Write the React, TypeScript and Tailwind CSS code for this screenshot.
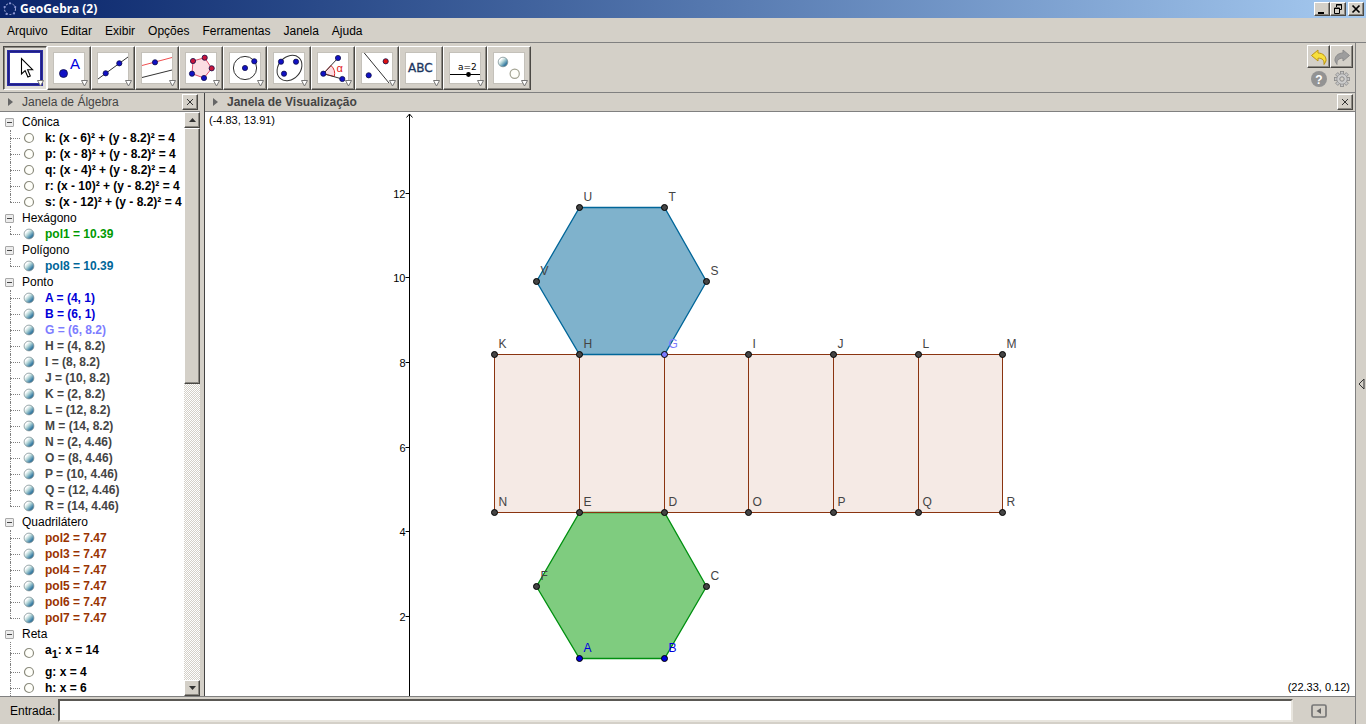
import React, { useState } from 'react';

const BLUE = '#1111c4';
const RED = '#c8143c';

interface Item {
  text: string;
  sub?: string;
  rest?: string;
  color: string;
  shown: boolean;
}

interface Group {
  name: string;
  items: Item[];
}

const hidden = (text: string): Item => ({ text, color: '#000000', shown: false });
const shown = (color: string) => (text: string): Item => ({ text, color, shown: true });

const GROUPS: Group[] = [
  {
    name: 'Cônica',
    items: [
      'k: (x - 6)² + (y - 8.2)² = 4',
      'p: (x - 8)² + (y - 8.2)² = 4',
      'q: (x - 4)² + (y - 8.2)² = 4',
      'r: (x - 10)² + (y - 8.2)² = 4',
      's: (x - 12)² + (y - 8.2)² = 4',
    ].map(hidden),
  },
  { name: 'Hexágono', items: ['pol1 = 10.39'].map(shown('#009900')) },
  { name: 'Polígono', items: ['pol8 = 10.39'].map(shown('#006699')) },
  {
    name: 'Ponto',
    items: [
      ...['A = (4, 1)', 'B = (6, 1)'].map(shown('#0000d8')),
      ...['G = (6, 8.2)'].map(shown('#7d7dff')),
      ...[
        'H = (4, 8.2)',
        'I = (8, 8.2)',
        'J = (10, 8.2)',
        'K = (2, 8.2)',
        'L = (12, 8.2)',
        'M = (14, 8.2)',
        'N = (2, 4.46)',
        'O = (8, 4.46)',
        'P = (10, 4.46)',
        'Q = (12, 4.46)',
        'R = (14, 4.46)',
      ].map(shown('#444444')),
    ],
  },
  {
    name: 'Quadrilátero',
    items: ['pol2 = 7.47', 'pol3 = 7.47', 'pol4 = 7.47', 'pol5 = 7.47', 'pol6 = 7.47', 'pol7 = 7.47'].map(
      shown('#993300'),
    ),
  },
  {
    name: 'Reta',
    items: [
      { text: 'a', sub: '1', rest: ': x = 14', color: '#000000', shown: false },
      hidden('g: x = 4'),
      hidden('h: x = 6'),
    ],
  },
];

const MENUS = ['Arquivo', 'Editar', 'Exibir', 'Opções', 'Ferramentas', 'Janela', 'Ajuda'];

const RAISED =
  'bg-[#d4d0c8] border border-t-white border-l-white border-r-[#4a4844] border-b-[#4a4844] shadow-[inset_-1px_-1px_#8c8983]';
const SUNKEN =
  'bg-[#e2dfd9] border border-t-[#4a4844] border-l-[#4a4844] border-r-white border-b-white shadow-[inset_1px_1px_#8c8983]';

const Dot = ({ x, y, c = BLUE, r = 2.6 }: { x: number; y: number; c?: string; r?: number }) => (
  <circle cx={x} cy={y} r={r} fill={c} stroke="#10104a" strokeWidth="0.8" />
);

const Sphere = ({ x, y, r, id }: { x: number; y: number; r: number; id: string }) => (
  <>
    <defs>
      <linearGradient id={id} x1="0.1" y1="0.1" x2="0.9" y2="0.9">
        <stop offset="0.2" stopColor="#ffffff" />
        <stop offset="0.45" stopColor="#b5d6d8" />
        <stop offset="0.8" stopColor="#3b7fa5" />
        <stop offset="1" stopColor="#2a6288" />
      </linearGradient>
    </defs>
    <circle cx={x} cy={y} r={r} fill={`url(#${id})`} stroke="#7f9296" strokeWidth="0.8" />
  </>
);

const TOOLS: { label: string; icon: React.ReactNode }[] = [
  {
    label: 'Mover',
    icon: (
      <path
        d="M12.5 6.5v15.5l3.6-3.4 2.8 6.4 2.4-1-2.7-6.3h5z"
        fill="#fff"
        stroke="#000"
        strokeWidth="1.1"
      />
    ),
  },
  {
    label: 'Ponto',
    icon: (
      <>
        <Dot x={10.5} y={21.5} r={4} />
        <text x="17" y="17" fontSize="15" fill="#0000dd">A</text>
      </>
    ),
  },
  {
    label: 'Reta',
    icon: (
      <>
        <path d="M1 27L31 5" stroke="#333" />
        <Dot x={8.7} y={21.3} />
        <Dot x={22.3} y={11.3} />
      </>
    ),
  },
  {
    label: 'Reta paralela',
    icon: (
      <>
        <path d="M1 13.5L31 5.5" stroke="#f05050" />
        <path d="M1 25.5L31 18" stroke="#333" />
        <Dot x={14} y={10.3} />
      </>
    ),
  },
  {
    label: 'Polígono',
    icon: (
      <>
        <path d="M8 9L19.7 5.7 26.7 16.3 19 26 7 21.7z" fill="#fbdde2" stroke="#e0506a" />
        <Dot x={8} y={9} c={RED} />
        <Dot x={19.7} y={5.7} c={RED} />
        <Dot x={26.7} y={16.3} c={RED} />
        <Dot x={19} y={26} />
        <Dot x={7} y={21.7} />
      </>
    ),
  },
  {
    label: 'Círculo',
    icon: (
      <>
        <circle cx="16" cy="16" r="11.6" fill="none" stroke="#333" />
        <Dot x={16} y={16} />
        <Dot x={25.3} y={9.3} />
      </>
    ),
  },
  {
    label: 'Elipse',
    icon: (
      <>
        <ellipse cx="16.5" cy="16" rx="14" ry="11" fill="none" stroke="#333" transform="rotate(-48 16.5 16)" />
        <Dot x={8} y={9.7} />
        <Dot x={23} y={9.7} />
        <Dot x={11} y={21.7} />
      </>
    ),
  },
  {
    label: 'Ângulo',
    icon: (
      <>
        <path d="M6.3 21.7L14 13.5A11.3 11.3 0 0 1 17.3 24.5z" fill="#fbdde2" stroke="#dd2a2a" />
        <path d="M21 6L6.3 21.7 25.3 27" fill="none" stroke="#333" />
        <Dot x={6.3} y={21.7} />
        <Dot x={21} y={6} />
        <Dot x={25.3} y={27} />
        <text x="19.5" y="20" fontSize="11" fill="#e02020">α</text>
      </>
    ),
  },
  {
    label: 'Reflexão',
    icon: (
      <>
        <path d="M3.3 1L28 31" stroke="#333" />
        <Dot x={24.7} y={9.3} c="#dd1111" />
        <Dot x={7.7} y={23.3} />
      </>
    ),
  },
  {
    label: 'Texto',
    icon: (
      <text x="3" y="20" fontSize="12" className="font-['DejaVu_Sans']" fill="#1a3560" stroke="#1a3560" strokeWidth="0.3">
        ABC
      </text>
    ),
  },
  {
    label: 'Controle deslizante',
    icon: (
      <>
        <text x="9" y="18" fontSize="9" className="font-['DejaVu_Sans']" fill="#000">a=2</text>
        <path d="M1 22.5H31" stroke="#000" />
        <circle cx="19.5" cy="22.5" r="2.4" fill="#000" />
      </>
    ),
  },
  {
    label: 'Exibir objeto',
    icon: (
      <>
        <Sphere x={10} y={10} r={4.8} id="tool-sphere" />
        <circle cx="21.7" cy="21.7" r="4.6" fill="#fffffa" stroke="#a3a392" strokeWidth="1.2" />
      </>
    ),
  },
];

interface ToolButtonProps {
  label: string;
  icon: React.ReactNode;
  active: boolean;
  onClick: () => void;
}

const ToolButton = ({ label, icon, active, onClick }: ToolButtonProps) => (
  <button aria-label={label} onClick={onClick} className={`size-11 p-px ${active ? SUNKEN : RAISED}`}>
    <svg viewBox="-4 -4 40 40" className="block size-10 font-['Liberation_Sans']">
      {active ? (
        <>
          <rect x="-0.5" y="-0.5" width="33" height="33" fill="#fff" stroke="#2e2ea4" strokeWidth="3" />
          <rect x="-0.5" y="-0.5" width="33" height="33" fill="none" stroke="#10105e" strokeWidth="1" strokeDasharray="1 1" />
        </>
      ) : (
        <rect x="0.5" y="0.5" width="31" height="31" fill="#fff" stroke="#c4c1ba" />
      )}
      {icon}
      <path d="M28.5 28.5H34.5L31.5 34z" fill="#fff" stroke="#777" />
    </svg>
  </button>
);

const CloseButton = ({ label }: { label: string }) => (
  <button aria-label={label} className={`flex size-4 items-center justify-center ${RAISED}`}>
    <svg viewBox="0 0 8 8" className="size-2">
      <path d="M1 1L7 7M7 1L1 7" stroke="#333" />
    </svg>
  </button>
);

const PanelHeader = ({ title, bold }: { title: string; bold?: boolean }) => (
  <div className="flex h-[19px] shrink-0 items-center border-b border-[#808080] bg-[#d4d0c8] pr-0.5 pl-2 text-[#444]">
    <svg viewBox="0 0 5 8" className="h-2 w-[5px]">
      <path d="M0 0L5 4 0 8z" fill="#666" />
    </svg>
    <h2 className={bold ? 'ml-[9px] flex-1 font-bold' : 'ml-[9px] flex-1'}>{title}</h2>
    <CloseButton label={`Fechar ${title}`} />
  </div>
);

const TitleBar = () => (
  <header className="flex h-[18px] shrink-0 items-center bg-linear-to-r from-[#0a246a] to-[#a6caf0] pr-0.5 pl-[3px]">
    <svg viewBox="0 0 14 14" className="size-3.5">
      <circle cx="7" cy="7" r="5.5" fill="none" stroke="#aab4dc" strokeDasharray="2 1.5" />
      {[[7, 1.3], [12.2, 5], [11, 11.5], [3.5, 12], [1.6, 5]].map(([x, y]) => (
        <circle key={x} cx={x} cy={y} r="1.1" fill="#8d97d8" />
      ))}
    </svg>
    <h1 className="ml-[3px] flex-1 font-['Noto_Sans'] text-xs font-bold text-white">GeoGebra (2)</h1>
    <div className="flex">
      <button aria-label="Minimizar" className={`h-3.5 w-4 ${RAISED}`}>
        <svg viewBox="0 0 14 12" className="block h-3 w-3.5"><path d="M3 9h6v2H3z" /></svg>
      </button>
      <button aria-label="Restaurar" className={`h-3.5 w-4 ${RAISED}`}>
        <svg viewBox="0 0 14 12" className="block h-3 w-3.5">
          <path d="M5.5 4V1.5h5v5H8.5M5 2h6" fill="none" stroke="#000" />
          <path d="M3.5 5h5v5.5h-5zM3 5.5h6" fill="none" stroke="#000" />
        </svg>
      </button>
      <button aria-label="Fechar" className={`ml-0.5 h-3.5 w-4 ${RAISED}`}>
        <svg viewBox="0 0 14 12" className="block h-3 w-3.5">
          <path d="M3.5 2.5l7 7M10.5 2.5l-7 7" stroke="#000" strokeWidth="1.7" />
        </svg>
      </button>
    </div>
  </header>
);

const Toolbar = () => {
  const [active, setActive] = useState(0);
  return (
    <div className="flex h-[50px] shrink-0 items-start justify-between border-b border-[#808080] pr-0.5 pl-[3px]">
      <div className="flex pt-[3px]">
        {TOOLS.map((t, i) => (
          <ToolButton key={t.label} label={t.label} icon={t.icon} active={i === active} onClick={() => setActive(i)} />
        ))}
      </div>
      <div className="grid grid-cols-2 gap-y-[3px] pt-0.5">
        <button aria-label="Desfazer" className={`flex size-[23px] items-center justify-center ${RAISED}`}>
          <svg viewBox="0 0 18 18" className="size-[18px] shrink-0">
            <path d="M1.5 7.5L8 2v3c5 0 8.5 3.5 8 8l-2 3.5c.5-4-1.5-6.5-6-6.3V13z" fill="#f7df3c" stroke="#bd9410" />
          </svg>
        </button>
        <button aria-label="Refazer" className={`flex size-[23px] items-center justify-center ${RAISED}`}>
          <svg viewBox="0 0 18 18" className="size-[18px] shrink-0">
            <path d="M16.5 7.5L10 2v3c-5 0-8.5 3.5-8 8l2 3.5c-.5-4 1.5-6.5 6-6.3V13z" fill="#9d9d9d" stroke="#8c8c8c" />
          </svg>
        </button>
        <button aria-label="Ajuda" className="flex justify-center">
          <svg viewBox="0 0 16 16" className="size-4">
            <circle cx="8" cy="8" r="8" fill="#939393" />
            <text x="8" y="12.5" textAnchor="middle" fontSize="12" fontWeight="bold" fill="#fff">?</text>
          </svg>
        </button>
        <button aria-label="Preferências" className="flex justify-center">
          <svg viewBox="0 0 16 16" className="size-4">
            {[0, 45, 90, 135].map((a) => (
              <g key={a} transform={`rotate(${a} 8 8)`}>
                <rect x="6.4" y="0.5" width="3.2" height="15" fill="#c6c6c6" stroke="#8a8a8a" strokeWidth="0.8" />
              </g>
            ))}
            <circle cx="8" cy="8" r="5.2" fill="#cdcdcd" stroke="#929292" strokeWidth="0.8" />
            <circle cx="8" cy="8" r="2.2" fill="#d4d0c8" stroke="#8a8a8a" strokeWidth="1" />
          </svg>
        </button>
      </div>
    </div>
  );
};

const Marker = ({ item }: { item: Item }) => {
  const id = 'sphere-' + item.text.replace(/\W/g, '');
  return (
    <button aria-label={`Exibir ${item.text}`} aria-pressed={item.shown} className="ml-[3px] size-3 self-center">
      <svg viewBox="0 0 12 12" className="block size-3">
        {item.shown ? (
          <Sphere x={6} y={6} r={4.9} id={id} />
        ) : (
          <circle cx="6" cy="6" r="4.5" fill="#fffffa" stroke="#8c8c7e" strokeWidth="1.2" />
        )}
      </svg>
    </button>
  );
};

const TreeGroup = ({ group }: { group: Group }) => {
  const [open, setOpen] = useState(true);
  return (
    <li>
      <div className="flex h-4 items-center">
        <button
          aria-label={`Recolher ${group.name}`}
          onClick={() => setOpen(!open)}
          className="ml-[5px] flex size-[9px] items-center justify-center rounded-[1px] border border-[#a8a8a8] bg-[#ececec]"
        >
          <span className="h-px w-[5px] bg-[#444]" />
        </button>
        <span className="ml-2 text-black">{group.name}</span>
      </div>
      {open && (
        <ul>
          {group.items.map((item, i) => (
            <li key={item.text} className={item.sub ? 'flex h-[22px] items-start' : 'flex h-4 items-start'}>
              <span className="ml-2.5 flex w-2.5 flex-col self-stretch">
                <span className="flex-1 border-l border-dotted border-[#808080]" />
                <span className="border-t border-dotted border-[#808080]" />
                <span
                  className={
                    i === group.items.length - 1 && group.name !== 'Reta'
                      ? 'flex-1'
                      : 'flex-1 border-l border-dotted border-[#808080]'
                  }
                />
              </span>
              <Marker item={item} />
              <span className="ml-2.5 leading-4 font-bold whitespace-nowrap" style={{ color: item.color }}>
                {item.text}
                {item.sub && <sub className="-bottom-1 text-[11px]">{item.sub}</sub>}
                {item.rest}
              </span>
            </li>
          ))}
        </ul>
      )}
    </li>
  );
};

const ScrollArrow = ({ label, d }: { label: string; d: string }) => (
  <button aria-label={label} className={`flex size-4 shrink-0 items-center justify-center ${RAISED}`}>
    <svg viewBox="0 0 7 4" className="h-1 w-[7px]"><path d={d} fill="#333" /></svg>
  </button>
);

const AlgebraPanel = () => (
  <section className="flex w-[200px] shrink-0 flex-col">
    <PanelHeader title="Janela de Álgebra" />
    <div className="flex min-h-0 flex-1 bg-white">
      <ul className="min-w-0 flex-1 overflow-hidden pt-0.5">
        {GROUPS.map((g) => (
          <TreeGroup key={g.name} group={g} />
        ))}
      </ul>
      <div className="flex w-4 flex-col bg-[repeating-conic-gradient(#d4d0c8_0_25%,#ffffff_0_50%)] bg-size-[2px_2px]">
        <ScrollArrow label="Rolar para cima" d="M3.5 0L7 4H0z" />
        <div className={`h-64 ${RAISED}`} />
        <div className="flex-1" />
        <ScrollArrow label="Rolar para baixo" d="M0 0H7L3.5 4z" />
      </div>
    </div>
  </section>
);

// world -> screen
const px = (x: number) => Math.round(204.4 + x * 42.35) + 0.5;
const py = (y: number) => Math.round(588.4 - y * 42.3) + 0.5;

const DARK = '#444444';
const POINTS: [string, number, number, string?][] = [
  ['U', 4, 11.66],
  ['T', 6, 11.66],
  ['V', 3, 9.92],
  ['S', 7, 9.92],
  ['K', 2, 8.2],
  ['H', 4, 8.2],
  ['G', 6, 8.2, '#7d7dff'],
  ['I', 8, 8.2],
  ['J', 10, 8.2],
  ['L', 12, 8.2],
  ['M', 14, 8.2],
  ['N', 2, 4.46],
  ['E', 4, 4.46],
  ['D', 6, 4.46],
  ['O', 8, 4.46],
  ['P', 10, 4.46],
  ['Q', 12, 4.46],
  ['R', 14, 4.46],
  ['F', 3, 2.7],
  ['C', 7, 2.7],
  ['A', 4, 1, '#0000dd'],
  ['B', 6, 1, '#0000dd'],
];

const outline = (names: string) =>
  names
    .split('')
    .map((n) => {
      const p = POINTS.find((q) => q[0] === n)!;
      return `${px(p[1])},${py(p[2])}`;
    })
    .join(' ');

const GraphicsView = () => (
  <section className="flex min-w-0 flex-1 flex-col border-l border-[#444]">
    <PanelHeader title="Janela de Visualização" bold />
    <div className="min-h-0 flex-1 bg-white">
      <svg width="100%" height="100%" className="block font-['Liberation_Sans']">
        <text x="4" y="12" fontSize="11">(-4.83, 13.91)</text>
        <svg x="100%" y="100%" overflow="visible">
          <text x="-5" y="-5" fontSize="11" textAnchor="end">(22.33, 0.12)</text>
        </svg>
        <line x1={px(0)} y1="2" x2={px(0)} y2="100%" stroke="#000" />
        <path d={`M${px(0) - 3} 5.5L${px(0)} 2 ${px(0) + 3} 5.5`} fill="none" stroke="#000" />
        {[2, 4, 6, 8, 10, 12].map((n) => (
          <g key={n}>
            <line x1={px(0) - 4} y1={py(n)} x2={px(0)} y2={py(n)} stroke="#000" />
            <text x={px(0) - 4} y={py(n) + 4} fontSize="11" textAnchor="end">{n}</text>
          </g>
        ))}

        <polygon points={outline('ABCDEF')} fill="#009900" fillOpacity="0.5" stroke="#009010" strokeWidth="1.3" />
        {['KHEN', 'HGDE', 'GIOD', 'IJPO', 'JLQP', 'LMRQ'].map((names) => (
          <polygon key={names} points={outline(names)} fill="#993300" fillOpacity="0.1" stroke="#8a3410" />
        ))}
        <polygon points={outline('HGSTUV')} fill="#006699" fillOpacity="0.5" stroke="#006699" strokeWidth="1.3" />

        {POINTS.map(([name, x, y, color = DARK]) => (
          <g key={name}>
            <circle cx={px(x)} cy={py(y)} r="3" fill={color} stroke="#000" />
            <text x={px(x) + 4} y={py(y) - 7} fontSize="12" fill={color}>{name}</text>
          </g>
        ))}
      </svg>
    </div>
  </section>
);

const InputBar = () => (
  <div className="flex h-7 shrink-0 items-center border-t border-[#808080] pl-2.5">
    <label htmlFor="entrada">Entrada:</label>
    <input
      id="entrada"
      type="text"
      className="ml-[3px] h-[23px] min-w-0 flex-1 border-2 border-t-[#5a5854] border-l-[#5a5854] border-r-[#e8e5de] border-b-[#e8e5de] bg-white px-1 outline-none"
    />
    <button aria-label="Ajuda de entrada" className="mr-7 ml-[18px]">
      <svg viewBox="0 0 16 14" className="block h-3.5 w-4">
        <rect x="1" y="1" width="14" height="12" rx="1.5" fill="none" stroke="#777" strokeWidth="1.7" />
        <path d="M10 4v6L5.5 7z" fill="#666" />
      </svg>
    </button>
  </div>
);

export default function App() {
  return (
    <div className="flex h-screen flex-col overflow-hidden bg-[#d4d0c8] font-['Liberation_Sans',Arial,sans-serif] text-xs text-black">
      <TitleBar />
      <nav className="flex h-[25px] shrink-0 items-center gap-[13px] border-b border-[#808080] pt-0.5 pl-[7px]">
        {MENUS.map((m) => (
          <button key={m}>{m}</button>
        ))}
      </nav>
      <div className="flex min-h-0 flex-1">
        <div className="flex min-w-0 flex-1 flex-col">
          <Toolbar />
          <main className="flex min-h-0 flex-1 gap-1">
            <AlgebraPanel />
            <GraphicsView />
          </main>
          <InputBar />
        </div>
        <aside className="flex w-[11px] shrink-0 items-center border-l border-[#808080]">
          <button aria-label="Mostrar painel" className="ml-0.5">
            <svg viewBox="0 0 7 12" className="block h-3 w-[7px]">
              <path d="M6 1v10L1 6z" fill="none" stroke="#333" />
            </svg>
          </button>
        </aside>
      </div>
    </div>
  );
}
